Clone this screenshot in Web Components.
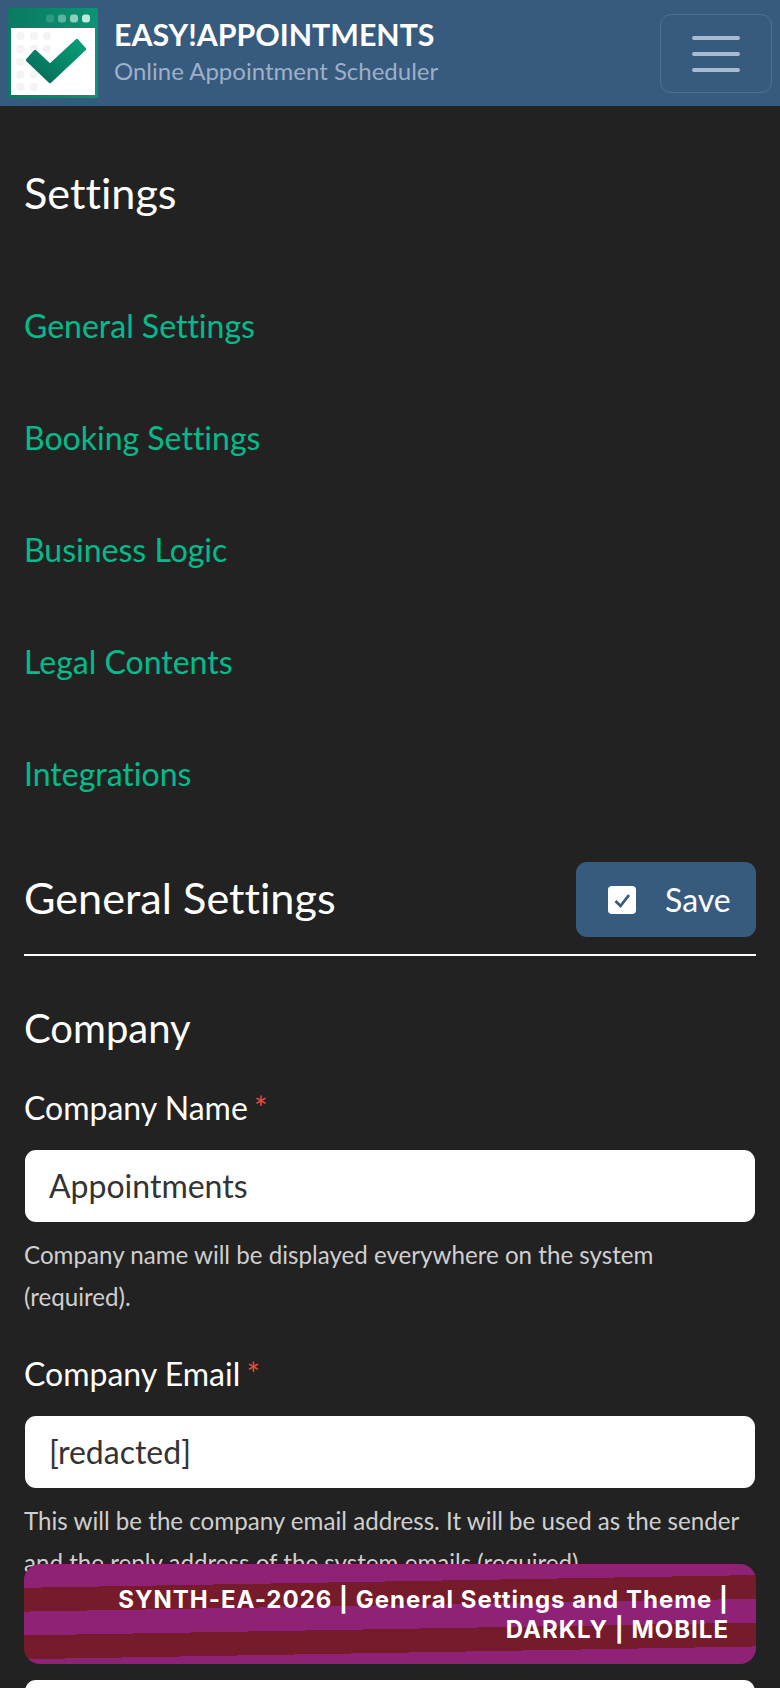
<!DOCTYPE html>
<html lang="en">
<head>
<meta charset="utf-8">
<title>Settings</title>
<style>
  html, body { margin: 0; height: 1688px; overflow: hidden; background: #222; }
  body { font-family: Lato, "Liberation Sans", sans-serif; font-variant-ligatures: none; color: #fff; position: relative; }
  main { display: block; padding: 0 24px; }
</style>
</head>
<body>
<ea-header></ea-header>
<main>
  <ea-page-title>Settings</ea-page-title>
  <ea-side-nav>
    <ea-nav-link>General Settings</ea-nav-link>
    <ea-nav-link>Booking Settings</ea-nav-link>
    <ea-nav-link>Business Logic</ea-nav-link>
    <ea-nav-link>Legal Contents</ea-nav-link>
    <ea-nav-link>Integrations</ea-nav-link>
  </ea-side-nav>
  <ea-section-head>General Settings</ea-section-head>
  <ea-group-title>Company</ea-group-title>
  <ea-field label="Company Name" value="Appointments" required>Company name will be displayed everywhere on the system (required).</ea-field>
  <ea-field label="Company Email" value="[redacted]" required>This will be the company email address. It will be used as the sender and the reply address of the system emails (required).</ea-field>
  <ea-field label="" value="" style="padding-top: 31px"></ea-field>
</main>
<ea-banner>SYNTH-EA-2026 | General Settings and Theme | DARKLY | MOBILE</ea-banner>

<script>
class EaHeader extends HTMLElement {
  constructor() {
    super();
    this.attachShadow({ mode: 'open' }).innerHTML = `
      <style>
        :host { display: flex; align-items: center; height: 106px; background: #375a7f; padding: 0 8px; box-sizing: border-box; }
        svg.logo { width: 90px; height: 90px; flex: none; margin-right: 16px; }
        .brand { flex: 1; display: flex; flex-direction: column; margin-top: -2px; }
        .name { font-size: 30.3px; font-weight: 700; line-height: 36px; color: #fff; }
        .sub { font-size: 24px; line-height: 37px; color: #9db0c7; }
        .toggler { width: 112px; height: 79px; margin-top: 1px; box-sizing: border-box; border: 1.5px solid #4f7094; border-radius: 11px; display: flex; flex-direction: column; align-items: center; justify-content: center; gap: 12px; }
        .toggler i { display: block; width: 48px; height: 4px; border-radius: 2px; background: #abbbd0; }
      </style>
      <svg class="logo" viewBox="0 0 90 90">
        <defs>
          <linearGradient id="top" x1="0" x2="1" y1="0" y2="0"><stop offset="0" stop-color="#0a7a62"/><stop offset="1" stop-color="#0c9474"/></linearGradient>
          <linearGradient id="tick" x1="0" x2="1" y1="1" y2="0"><stop offset="0" stop-color="#086655"/><stop offset="1" stop-color="#06a178"/></linearGradient>
        </defs>
        <rect width="90" height="90" rx="2" fill="url(#top)"/>
        <rect x="3" y="20" width="84" height="67" fill="#fff"/>
        <rect x="38" y="6.5" width="8" height="8" rx="3" fill="#2f9a80"/>
        <rect x="50" y="6.5" width="8" height="8" rx="3" fill="#5cb59d"/>
        <rect x="62" y="6.5" width="8" height="8" rx="3" fill="#8ed0bb"/>
        <rect x="74" y="6.5" width="8" height="8" rx="3" fill="#bfead9"/>
        <g fill="#f4f4f5">
          <rect x="8.5" y="24" width="8" height="8" rx="3"/><rect x="22" y="24" width="8" height="8" rx="3"/><rect x="35" y="24" width="8" height="8" rx="3"/>
          <rect x="8.5" y="37" width="8" height="8" rx="3"/><rect x="22" y="37" width="8" height="8" rx="3"/><rect x="35" y="37" width="8" height="8" rx="3"/>
          <rect x="8.5" y="50" width="8" height="8" rx="3"/>
          <rect x="8.5" y="62.5" width="8" height="8" rx="3"/><rect x="22" y="62.5" width="8" height="8" rx="3"/>
          <rect x="8.5" y="75" width="8" height="8" rx="3"/><rect x="22" y="75" width="8" height="8" rx="3"/>
        </g>
        <polygon points="19,52 27,43 42,57 69,32 77,41 42,74" fill="url(#tick)" stroke="url(#tick)" stroke-width="2.5" stroke-linejoin="round"/>
      </svg>
      <div class="brand"><div class="name">EASY!APPOINTMENTS</div><div class="sub">Online Appointment Scheduler</div></div>
      <div class="toggler"><i></i><i></i><i></i></div>`;
  }
}
class EaPageTitle extends HTMLElement {
  constructor() {
    super();
    this.attachShadow({ mode: 'open' }).innerHTML = `
      <style>:host { display: block; font-size: 43.2px; line-height: 50px; padding-top: 61px; color: #fff; }</style>
      <slot></slot>`;
  }
}
class EaSideNav extends HTMLElement {
  constructor() {
    super();
    this.attachShadow({ mode: 'open' }).innerHTML = `
      <style>:host { display: flex; flex-direction: column; padding-top: 53px; }</style>
      <slot></slot>`;
  }
}
class EaNavLink extends HTMLElement {
  constructor() {
    super();
    this.attachShadow({ mode: 'open' }).innerHTML = `
      <style>:host { display: block; height: 112px; line-height: 112px; font-size: 32px; color: #00bc8c; }</style>
      <slot></slot>`;
  }
}
class EaSectionHead extends HTMLElement {
  constructor() {
    super();
    this.attachShadow({ mode: 'open' }).innerHTML = `
      <style>
        :host { display: flex; align-items: center; justify-content: space-between; height: 94px; margin-top: 32px; box-sizing: border-box; padding: 0 0 17px; border-bottom: 2px solid #fff; font-size: 43.2px; color: #fff; }
        span { margin-bottom: 5px; }
        button { font: inherit; font-size: 32px; color: #fff; background: #375a7f; border: 0; border-radius: 11px; width: 180px; height: 75px; display: flex; align-items: center; padding: 0 0 0 32px; gap: 29px; box-sizing: border-box; }
        svg { width: 28px; height: 28px; flex: none; }
      </style>
      <span><slot></slot></span>
      <button><svg viewBox="0 0 28 28"><rect width="28" height="28" rx="4" fill="#fff"/><path d="M7.5 15 L12.5 20 L21 9" fill="none" stroke="#375a7f" stroke-width="2.8"/></svg>Save</button>`;
  }
}
class EaGroupTitle extends HTMLElement {
  constructor() {
    super();
    this.attachShadow({ mode: 'open' }).innerHTML = `
      <style>:host { display: block; font-size: 40px; line-height: 48px; padding-top: 48px; color: #fff; }</style>
      <slot></slot>`;
  }
}
class EaField extends HTMLElement {
  constructor() {
    super();
    const label = this.getAttribute('label');
    const value = this.getAttribute('value') || '';
    const star = this.hasAttribute('required') ? '<span class="star">*</span>' : '';
    this.attachShadow({ mode: 'open' }).innerHTML = `
      <style>
        :host { display: block; padding-top: 33px; }
        .label { font-size: 32px; line-height: 46px; height: 46px; color: #fff; margin-bottom: 19px; }
        .star { color: #e74c3c; margin-left: -2px; font-size: 32px; }
        .input { height: 72px; box-sizing: border-box; margin: 0 1px; background: #fff; border-radius: 11px; padding: 0 24px; font-size: 32px; line-height: 72px; color: #333; }
        .hint { font-size: 24.15px; line-height: 42px; color: #cfcfcf; margin-top: 12px; }
      </style>
      <div class="label">${label} ${star}</div>
      <div class="input">${value}</div>
      <div class="hint"><slot></slot></div>`;
  }
}
class EaBanner extends HTMLElement {
  constructor() {
    super();
    this.attachShadow({ mode: 'open' }).innerHTML = `
      <style>
        :host { position: absolute; left: 24px; top: 1564px; width: 732px; height: 100px; box-sizing: border-box; border-radius: 16px; padding: 21px 27px 0; text-align: right;
          font-family: Inter, "Liberation Sans", sans-serif; font-weight: 700; font-size: 24px; line-height: 30px; letter-spacing: 1px; color: #fff;
          background: repeating-linear-gradient(179deg, #8f2276 0 23.8px, #751b2b 23.8px 47.6px); }
      </style>
      <slot></slot>`;
  }
}
customElements.define('ea-header', EaHeader);
customElements.define('ea-page-title', EaPageTitle);
customElements.define('ea-side-nav', EaSideNav);
customElements.define('ea-nav-link', EaNavLink);
customElements.define('ea-section-head', EaSectionHead);
customElements.define('ea-group-title', EaGroupTitle);
customElements.define('ea-field', EaField);
customElements.define('ea-banner', EaBanner);
</script>
</body>
</html>
